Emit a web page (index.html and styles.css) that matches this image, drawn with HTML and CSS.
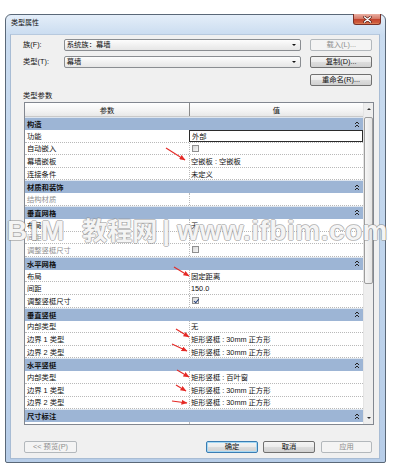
FILE: index.html
```html
<!DOCTYPE html>
<html lang="zh-CN">
<head>
<meta charset="utf-8">
<title>类型属性</title>
<link rel="stylesheet" href="styles.css">
</head>
<body>
<div class="window">
  <div class="titlebar">
    <span class="title">类型属性</span>
    <div class="close">
      <svg width="9" height="7" viewBox="0 0 9 7"><path d="M1.5 1 L7.5 6 M7.5 1 L1.5 6" stroke="#4a1a14" stroke-width="2.6" stroke-linecap="round"/><path d="M1.5 1 L7.5 6 M7.5 1 L1.5 6" stroke="#fff" stroke-width="1.4" stroke-linecap="round"/></svg>
    </div>
  </div>
  <div class="client">
    <div class="frow">
      <span class="lbl">族(F):</span>
      <div class="combo"><span>系统族：幕墙</span><i class="caret"></i></div>
      <div class="btn dis">载入(L)...</div>
    </div>
    <div class="frow r2">
      <span class="lbl">类型(T):</span>
      <div class="combo"><span>幕墙</span><i class="caret"></i></div>
      <div class="btn">复制(D)...</div>
    </div>
    <div class="frow r3">
      <div class="btn">重命名(R)...</div>
    </div>
    <div class="section">类型参数</div>
    <div class="grid">
      <div class="gbody">
        <div class="ghead"><div class="c1">参数</div><div class="c2">值</div></div>
        <div class="grp"><span>构造</span><i class="fold"></i></div>
        <div class="r"><div class="c1">功能</div><div class="c2 edit">外部</div></div>
        <div class="r"><div class="c1">自动嵌入</div><div class="c2"><i class="cb"></i></div></div>
        <div class="r"><div class="c1">幕墙嵌板</div><div class="c2">空嵌板 : 空嵌板</div></div>
        <div class="r"><div class="c1">连接条件</div><div class="c2">未定义</div></div>
        <div class="grp"><span>材质和装饰</span><i class="fold"></i></div>
        <div class="r"><div class="c1 dim">结构材质</div><div class="c2"></div></div>
        <div class="grp"><span>垂直网格</span><i class="fold"></i></div>
        <div class="r"><div class="c1">布局</div><div class="c2">无</div></div>
        <div class="r"><div class="c1 dim">间距</div><div class="c2"></div></div>
        <div class="r"><div class="c1 dim">调整竖梃尺寸</div><div class="c2"><i class="cb"></i></div></div>
        <div class="grp"><span>水平网格</span><i class="fold"></i></div>
        <div class="r"><div class="c1">布局</div><div class="c2">固定距离</div></div>
        <div class="r"><div class="c1">间距</div><div class="c2">150.0</div></div>
        <div class="r"><div class="c1">调整竖梃尺寸</div><div class="c2"><i class="cb on"></i></div></div>
        <div class="grp"><span>垂直竖梃</span><i class="fold"></i></div>
        <div class="r"><div class="c1">内部类型</div><div class="c2">无</div></div>
        <div class="r"><div class="c1">边界 1 类型</div><div class="c2">矩形竖梃 : 30mm 正方形</div></div>
        <div class="r"><div class="c1">边界 2 类型</div><div class="c2">矩形竖梃 : 30mm 正方形</div></div>
        <div class="grp"><span>水平竖梃</span><i class="fold"></i></div>
        <div class="r"><div class="c1">内部类型</div><div class="c2">矩形竖梃 : 百叶窗</div></div>
        <div class="r"><div class="c1">边界 1 类型</div><div class="c2">矩形竖梃 : 30mm 正方形</div></div>
        <div class="r"><div class="c1">边界 2 类型</div><div class="c2">矩形竖梃 : 30mm 正方形</div></div>
        <div class="grp"><span>尺寸标注</span><i class="fold"></i></div>
        <div class="r"><div class="c1">厚度</div><div class="c2"></div></div>
      </div>
      <div class="vscroll">
        <div class="sbtn"><i class="up"></i></div>
        <div class="thumb"></div>
        <div class="track"></div>
        <div class="sbtn"><i class="down"></i></div>
      </div>
    </div>
    <div class="footer">
      <div class="btn dis prev">&lt;&lt; 预览(P)</div>
      <div class="btn def">确定</div>
      <div class="btn cancel">取消</div>
      <div class="btn dis apply">应用</div>
    </div>
  </div>
</div>

<div class="watermark"><span class="wm-lat bim">BIM</span><span class="wm-cjk">教程网</span><span class="wm-lat pipe">|</span><span class="wm-lat url">www.ifbim.com</span></div>

<svg class="arrows" width="404" height="471" viewBox="0 0 404 471">
  <defs>
    <marker id="ah" markerWidth="6" markerHeight="5" refX="5.5" refY="2.5" orient="auto" markerUnits="userSpaceOnUse">
      <path d="M0,0 L6,2.5 L0,5 z" fill="#e52a26"/>
    </marker>
  </defs>
  <g stroke="#e52a26" stroke-width="1.1" fill="none" marker-end="url(#ah)">
    <line x1="166" y1="148" x2="185" y2="160"/>
    <line x1="174" y1="267" x2="189" y2="276"/>
    <line x1="176" y1="329" x2="189" y2="337"/>
    <line x1="172" y1="344" x2="187" y2="351"/>
    <line x1="177" y1="370" x2="189" y2="377"/>
    <line x1="176" y1="385" x2="186" y2="391"/>
    <line x1="172" y1="401" x2="187" y2="403"/>
  </g>
</svg>
</body>
</html>
```

FILE: styles.css
```css
* { box-sizing: border-box; }
html, body { margin: 0; padding: 0; }
body {
  width: 404px;
  height: 471px;
  background: #fff;
  font-family: "Liberation Sans", "Noto Sans CJK SC", sans-serif;
  font-size: 7.3px;
  color: #111;
  position: relative;
  overflow: hidden;
}

.window {
  margin: 14px 0 0 5px;
  width: 381px;
  height: 449px;
  border: 1px solid #5a6878;
  border-radius: 6px 6px 2px 2px;
  background: linear-gradient(#e4eef9, #cadcf0 20px, #bfd4ec 60%, #b7cde8);
  display: flex;
  flex-direction: column;
  padding: 0 5px 3px 4px;
}

.titlebar {
  height: 19px;
  display: flex;
  justify-content: space-between;
  align-items: flex-start;
  padding-left: 1px;
}
.title {
  font-size: 7px;
  line-height: 15px;
  color: #111;
}
.close {
  width: 28px;
  height: 11px;
  margin-top: -1px;
  margin-right: -1px;
  border: 1px solid #7a3026;
  border-top: none;
  border-radius: 0 0 3px 3px;
  background: linear-gradient(#eab0a3, #d77b69 45%, #c1412c 50%, #cf5b3c 85%, #e08a5f);
  display: flex;
  align-items: center;
  justify-content: center;
}
.close svg { display: block; }

.client {
  height: 425px;
  background: #f0f0f0;
  padding: 4px 7px 0 12px;
  display: flex;
  flex-direction: column;
  border: 1px solid #a8bcd4;
  border-top-color: #b7c9de;
}

.frow {
  display: flex;
  align-items: center;
  height: 12px;
}
.frow.r2 { margin-top: 5px; }
.frow.r3 { margin-top: 6px; justify-content: flex-end; }
.lbl { width: 41px; line-height: 12px; }
.combo {
  width: 239px;
  height: 12px;
  margin-right: 9px;
  border: 1px solid #8a8d91;
  border-radius: 2px;
  background: linear-gradient(#fdfdfd, #f1f1f1 50%, #e6e6e6);
  display: flex;
  align-items: center;
  justify-content: space-between;
  padding: 0 4px 0 2px;
  line-height: 10px;
}
.caret {
  width: 0;
  height: 0;
  border-left: 2px solid transparent;
  border-right: 2px solid transparent;
  border-top: 2px solid #111;
}

.btn {
  height: 12px;
  width: 62px;
  border: 1px solid #707070;
  border-radius: 2px;
  background: linear-gradient(#f4f4f4, #ececec 48%, #dddddd 52%, #d1d1d1);
  display: flex;
  align-items: center;
  justify-content: center;
  line-height: 10px;
  color: #111;
}
.btn.dis {
  border-color: #b3b8bc;
  background: #f4f4f4;
  color: #8d8d8d;
}
.btn.def {
  border-color: #3a7db3;
  box-shadow: inset 0 0 0 1px #a6d9f4;
}

.section {
  margin-top: 5px;
  line-height: 10px;
  height: 10px;
}

.grid {
  margin-top: 1px;
  margin-left: 1px;
  width: 350px;
  height: 323px;
  border: 1px solid #828790;
  display: flex;
  background: #fff;
}
.gbody {
  flex: 1;
  overflow: hidden;
  display: flex;
  flex-direction: column;
}
.ghead {
  flex: none;
  height: 14px;
  display: flex;
  background: linear-gradient(#ffffff, #f3f3f3 60%, #e8e8e8);
  border-bottom: 1px solid #c9c9c9;
}
.ghead .c1, .ghead .c2 {
  display: flex;
  align-items: center;
  justify-content: center;
}
.ghead .c1 { width: 164px; }
.ghead .c2 { flex: 1; border-left: 1px solid #8b8b8b; }

.grp {
  flex: none;
  height: 13px;
  border-top: 1px solid #dde5ef;
  background: #9db5d5;
  display: flex;
  align-items: center;
  justify-content: space-between;
  padding: 0 4px 0 2px;
  font-weight: bold;
  color: #111;
}
.fold {
  width: 4px;
  height: 5px;
  background:
    linear-gradient(135deg, transparent 45%, #222 46%, #222 60%, transparent 61%) 0 0 / 2px 2px no-repeat,
    linear-gradient(225deg, transparent 45%, #222 46%, #222 60%, transparent 61%) 2px 0 / 2px 2px no-repeat,
    linear-gradient(135deg, transparent 45%, #222 46%, #222 60%, transparent 61%) 0 3px / 2px 2px no-repeat,
    linear-gradient(225deg, transparent 45%, #222 46%, #222 60%, transparent 61%) 2px 3px / 2px 2px no-repeat;
}

.r {
  flex: none;
  height: 12.6px;
  display: flex;
  border-bottom: 1px dotted #b9b9b9;
  background: #fff;
}
.r .c1 {
  width: 164px;
  padding-left: 2px;
  display: flex;
  align-items: center;
  white-space: nowrap;
}
.r .c2 {
  flex: 1;
  border-left: 1px dotted #b9b9b9;
  padding-left: 1px;
  display: flex;
  align-items: center;
  white-space: nowrap;
}
.r .c2.edit {
  outline: 1px solid #2b2b2b;
  outline-offset: -1px;
  padding-left: 2px;
}
.dim { color: #8e8e8e; }

.cb {
  width: 7px;
  height: 7px;
  margin-left: 1px;
  border: 1px solid #8f8f8f;
  background: linear-gradient(135deg, #d8d8d8, #f7f7f7);
  position: relative;
}
.cb.on::after {
  content: "";
  position: absolute;
  left: 1.5px;
  top: 0;
  width: 2px;
  height: 3.5px;
  border-right: 1.2px solid #233f7a;
  border-bottom: 1.2px solid #233f7a;
  transform: rotate(40deg);
}

.vscroll {
  width: 10px;
  flex: none;
  display: flex;
  flex-direction: column;
  background: #eeeeee;
  border-left: 1px solid #e4e4e4;
}
.sbtn {
  height: 12px;
  flex: none;
  display: flex;
  align-items: center;
  justify-content: center;
}
.up, .down {
  width: 0;
  height: 0;
  border-left: 2px solid transparent;
  border-right: 2px solid transparent;
}
.up { border-bottom: 2px solid #333; }
.down { border-top: 2px solid #333; }
.thumb {
  flex: none;
  margin: 2px 0 0 0;
  height: 167px;
  border: 1px solid #9d9d9d;
  border-radius: 2px;
  background: linear-gradient(90deg, #f6f6f6, #e4e4e4);
}
.track { flex: 1; }

.footer {
  margin-top: 16px;
  display: flex;
  align-items: center;
  height: 12px;
}
.footer .btn { width: 52px; }
.footer .prev { width: 53px; margin-left: 1px; margin-right: auto; }
.footer .cancel { margin-left: 5px; }
.footer .apply { margin-left: 6px; width: 51px; }

.watermark {
  position: absolute;
  left: 7px;
  top: 215px;
  white-space: nowrap;
  line-height: 28px;
  font-weight: bold;
  color: rgba(255, 255, 255, 0.92);
  text-shadow:
    1px 0 0 rgba(140,140,140,0.55), -1px 0 0 rgba(140,140,140,0.55),
    0 1px 0 rgba(140,140,140,0.55), 0 -1px 0 rgba(140,140,140,0.55);
  pointer-events: none;
}
.wm-lat { font-family: "Liberation Sans", sans-serif; font-size: 28px; }
.bim { letter-spacing: 3px; }
.wm-cjk { font-family: "Noto Sans CJK SC", sans-serif; font-size: 25px; margin-left: 15px; }
.pipe { margin-left: 5px; }
.url { margin-left: 7px; letter-spacing: 0.5px; }

.arrows {
  position: absolute;
  left: 0;
  top: 0;
  pointer-events: none;
}
```
